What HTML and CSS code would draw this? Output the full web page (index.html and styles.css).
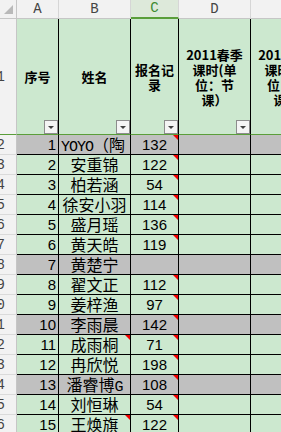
FILE: index.html
```
<!DOCTYPE html>
<html lang="zh-CN">
<head>
<meta charset="utf-8">
<title>报名记录</title>
<link rel="stylesheet" href="styles.css">
</head>
<body>
<div class="sheet">
  <div class="row">
    <div class="corner"><svg width="16" height="18" viewBox="0 0 16 18"><polygon points="13,5 13,14 4,14" fill="#b9b9b9"/></svg></div>
    <div class="ch">A</div>
    <div class="ch">B</div>
    <div class="ch ch-sel">C</div>
    <div class="ch">D</div>
    <div class="ch">E</div>
  </div>
  <div class="row">
    <div class="rh rh-top"><span>1</span></div>
    <div class="hd">序号<span class="filter"></span></div>
    <div class="hd">姓名<span class="filter"></span></div>
    <div class="hd">报名记<br>录<span class="filter"></span></div>
    <div class="hd">2011春季<br>课时(单<br>位：节<br>课）<span class="filter"></span></div>
    <div class="hd">2011秋季<br>课时(单<br>位：节<br>课）<span class="filter"></span></div>
  </div>
  <div class="row gray">
    <div class="rh"><span>2</span></div>
    <div class="c num">1</div>
    <div class="c name name-clip"><span class="half">YOYO</span>（陶</div>
    <div class="c val note">132</div>
    <div class="c"></div><div class="c"></div>
  </div>
  <div class="row">
    <div class="rh"><span>3</span></div>
    <div class="c num">2</div>
    <div class="c name">安重锦</div>
    <div class="c val note">122</div>
    <div class="c"></div><div class="c"></div>
  </div>
  <div class="row">
    <div class="rh"><span>4</span></div>
    <div class="c num">3</div>
    <div class="c name">柏若涵</div>
    <div class="c val note">54</div>
    <div class="c"></div><div class="c"></div>
  </div>
  <div class="row">
    <div class="rh"><span>5</span></div>
    <div class="c num">4</div>
    <div class="c name">徐安小羽</div>
    <div class="c val note">114</div>
    <div class="c"></div><div class="c"></div>
  </div>
  <div class="row">
    <div class="rh"><span>6</span></div>
    <div class="c num">5</div>
    <div class="c name">盛月瑶</div>
    <div class="c val note">136</div>
    <div class="c"></div><div class="c"></div>
  </div>
  <div class="row">
    <div class="rh"><span>7</span></div>
    <div class="c num">6</div>
    <div class="c name">黄天皓</div>
    <div class="c val note">119</div>
    <div class="c"></div><div class="c"></div>
  </div>
  <div class="row gray">
    <div class="rh"><span>8</span></div>
    <div class="c num">7</div>
    <div class="c name">黄楚宁</div>
    <div class="c val"></div>
    <div class="c"></div><div class="c"></div>
  </div>
  <div class="row">
    <div class="rh"><span>9</span></div>
    <div class="c num">8</div>
    <div class="c name">翟文正</div>
    <div class="c val note">112</div>
    <div class="c"></div><div class="c"></div>
  </div>
  <div class="row">
    <div class="rh"><span>10</span></div>
    <div class="c num">9</div>
    <div class="c name">姜梓渔</div>
    <div class="c val note">97</div>
    <div class="c"></div><div class="c"></div>
  </div>
  <div class="row gray">
    <div class="rh"><span>11</span></div>
    <div class="c num">10</div>
    <div class="c name">李雨晨</div>
    <div class="c val note">142</div>
    <div class="c"></div><div class="c"></div>
  </div>
  <div class="row">
    <div class="rh"><span>12</span></div>
    <div class="c num">11</div>
    <div class="c name note">成雨桐</div>
    <div class="c val note">71</div>
    <div class="c"></div><div class="c"></div>
  </div>
  <div class="row">
    <div class="rh"><span>13</span></div>
    <div class="c num">12</div>
    <div class="c name">冉欣悦</div>
    <div class="c val note">198</div>
    <div class="c"></div><div class="c"></div>
  </div>
  <div class="row gray">
    <div class="rh"><span>14</span></div>
    <div class="c num">13</div>
    <div class="c name">潘睿博<span class="half">G</span></div>
    <div class="c val note">108</div>
    <div class="c"></div><div class="c"></div>
  </div>
  <div class="row">
    <div class="rh"><span>15</span></div>
    <div class="c num">14</div>
    <div class="c name">刘恒琳</div>
    <div class="c val note">54</div>
    <div class="c"></div><div class="c"></div>
  </div>
  <div class="row">
    <div class="rh"><span>16</span></div>
    <div class="c num">15</div>
    <div class="c name note">王焕旗</div>
    <div class="c val note">122</div>
    <div class="c"></div><div class="c"></div>
  </div>
</div>
</body>
</html>
```
FILE: styles.css
```
html, body {
  margin: 0;
  padding: 0;
  background: #ffffff;
  overflow: hidden;
  width: 281px;
  height: 432px;
}

.sheet {
  display: grid;
  grid-template-columns: 17px 42px 72px 48px 72px 72px;
  grid-template-rows: 19px 116px repeat(15, 20px);
  width: max-content;
  font-family: "Noto Sans CJK SC", sans-serif;
  color: #000;
}

.row {
  display: contents;
}

.sheet > .row > div {
  box-sizing: border-box;
}

/* column letters */
.corner,
.ch {
  background: #f2f2f2;
  border-right: 1px solid #d6d6d6;
  border-bottom: 1px solid #c6c6c6;
}

.corner {
  border-right-color: #c6c6c6;
  display: flex;
}

.ch {
  font-family: "Liberation Mono", monospace;
  font-size: 14px;
  line-height: 18px;
  color: #444;
  text-align: center;
}

.ch-sel {
  background: #dde9da;
  color: #3f8a32;
  border-bottom: 2px solid #5a9e3a;
  line-height: 17px;
}

/* row numbers */
.rh {
  background: #f2f2f2;
  border-right: 1px solid #c6c6c6;
  border-bottom: 1px solid #dadada;
  display: flex;
  justify-content: flex-end;
  align-items: center;
  padding-right: 11px;
  overflow: hidden;
  white-space: nowrap;
  font-family: "Liberation Mono", monospace;
  font-size: 14px;
  color: #444;
}

.rh-top {
  border-bottom: 1px solid #5a9e3a;
}

/* header row */
.hd {
  position: relative;
  background: #cce8cf;
  border-right: 1px solid #000;
  border-bottom: 1px solid #5a9e3a;
  display: flex;
  align-items: center;
  justify-content: center;
  text-align: center;
  font-weight: bold;
  font-size: 13px;
  line-height: 15px;
  overflow: hidden;
  white-space: nowrap;
}

.filter {
  position: absolute;
  right: 0;
  bottom: 0;
  width: 14px;
  height: 14px;
  box-sizing: border-box;
  border: 1px solid #8c8c8c;
  background: #f4f4f4;
}

.filter::after {
  content: "";
  position: absolute;
  left: 3px;
  top: 5px;
  border-left: 3px solid transparent;
  border-right: 3px solid transparent;
  border-top: 3px solid #404040;
}

/* data cells */
.c {
  position: relative;
  background: #cce8cf;
  border-right: 1px solid #000;
  border-bottom: 1px solid #000;
  line-height: 19px;
  white-space: nowrap;
  overflow: hidden;
}

.gray > .c {
  background: #c0c0c0;
}

.num {
  font-family: "Liberation Sans", sans-serif;
  font-size: 15px;
  text-align: right;
  padding-right: 2px;
}

.val {
  font-family: "Liberation Sans", sans-serif;
  font-size: 15px;
  text-align: center;
}

.name {
  font-family: "Noto Sans CJK SC", sans-serif;
  font-size: 16px;
  text-align: center;
  padding: 0 2px;
}

.name-clip {
  text-align: left;
}

.half {
  font-family: "Liberation Mono", monospace;
  font-size: 15px;
  letter-spacing: -1px;
}

.note::after {
  content: "";
  position: absolute;
  top: 0;
  right: 0;
  width: 0;
  height: 0;
  border-right: 5px solid #f00000;
  border-bottom: 5px solid transparent;
}
```
